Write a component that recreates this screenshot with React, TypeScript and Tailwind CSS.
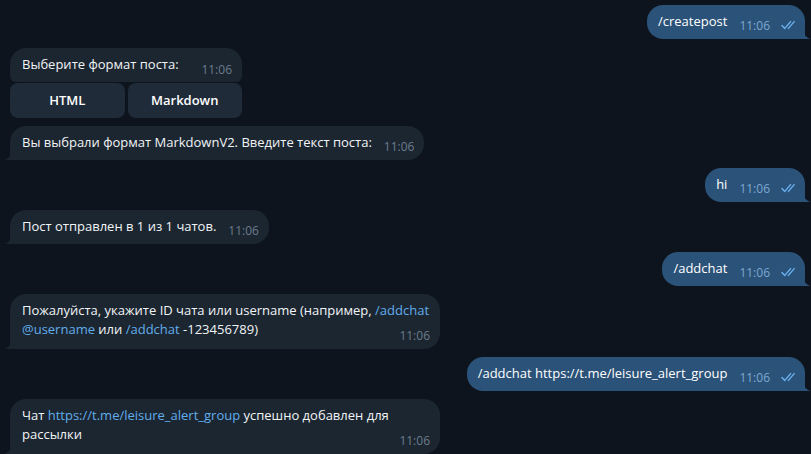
import React from "react";

const font = { fontFamily: '"Open Sans", "Noto Sans", sans-serif' };

function Checks() {
  return (
    <svg width="16" height="10" viewBox="0 0 16 10" fill="none" className="ml-[11px] mb-[1px] shrink-0">
      <path d="M1 5.6 L3.8 8.4 L9.6 1.6" stroke="#6ab2f2" strokeWidth="1.4" strokeLinecap="round" strokeLinejoin="round" />
      <path d="M7.4 8.4 L13.2 1.6" stroke="#6ab2f2" strokeWidth="1.4" strokeLinecap="round" />
    </svg>
  );
}

function InTail() {
  return (
    <svg width="9" height="14" viewBox="0 0 9 14" className="absolute -left-[6px] bottom-0">
      <path d="M9 0 V14 H0.5 C4 13 8 10 9 0 Z" fill="#1b2631" />
    </svg>
  );
}

function OutTail() {
  return (
    <svg width="9" height="14" viewBox="0 0 9 14" className="absolute -right-[6px] bottom-0">
      <path d="M0 0 V14 H8.5 C5 13 1 10 0 0 Z" fill="#2b5278" />
    </svg>
  );
}

function Out({ text, w }: { text: string; w?: string }) {
  return (
    <div className="flex justify-end pr-[6px]">
      <div className={`relative flex items-end bg-[#2b5278] rounded-l-[16px] rounded-tr-[16px] pl-[11px] pr-[8px] pt-[7px] pb-[8px] ${w ?? ""}`}>
        <span className="text-[13px] leading-[19px] text-white">{text}</span>
        <span className="ml-[12px] text-[12px] leading-[14px] text-[#7da8d3] translate-y-[2px]">11:06</span>
        <Checks />
        <OutTail />
      </div>
    </div>
  );
}

function In({ children, tail = true }: { children: React.ReactNode; tail?: boolean }) {
  return (
    <div className="flex pl-[10px]">
      <div className={`relative flex items-end bg-[#1b2631] rounded-r-[16px] rounded-tl-[16px] ${tail ? "" : "rounded-bl-[6px]"} pl-[12px] pr-[10px] pt-[7px] pb-[8px]`}>
        <span className="text-[13px] leading-[19px] text-[#f2f4f6]">{children}</span>
        <span className="ml-[12px] text-[12px] leading-[14px] text-[#6c7c8c] translate-y-[2px]">11:06</span>
        {tail && <InTail />}
      </div>
    </div>
  );
}

function InLong({ children }: { children: React.ReactNode }) {
  return (
    <div className="flex pl-[10px]">
      <div className="relative flex flex-col w-[430px] bg-[#1b2631] rounded-r-[16px] rounded-tl-[16px] pl-[12px] pr-[10px] pt-[7px] pb-[8px]">
        <p className="text-[13px] leading-[19px] text-[#f2f4f6]">{children}</p>
        <span className="self-end -mt-[12px] text-[12px] leading-[14px] text-[#6c7c8c] translate-y-[2px]">11:06</span>
        <InTail />
      </div>
    </div>
  );
}

const Link = ({ children }: { children: React.ReactNode }) => (
  <span className="text-[#62adeb]">{children}</span>
);

export default function App() {
  return (
    <div className="w-[811px] h-[454px] overflow-hidden bg-[#0e141d] pt-[5px] flex flex-col gap-[8px]" style={font}>
      <Out text="/createpost" />

      <div className="flex flex-col pl-[10px] gap-[1px] mt-[1px] w-[242px]">
        <div className="flex items-end justify-between bg-[#1b2631] rounded-t-[16px] rounded-b-[6px] pl-[12px] pr-[10px] pt-[7px] pb-[8px]">
          <span className="text-[13px] leading-[19px] text-[#f2f4f6]">Выберите формат поста:</span>
          <span className="text-[12px] leading-[14px] text-[#6c7c8c] translate-y-[3px]">11:06</span>
        </div>
        <div className="grid grid-cols-2 gap-[3px]">
          <div className="h-[35px] flex items-center justify-center rounded-[8px] bg-[#1f2b38] text-white text-[13px] font-semibold">HTML</div>
          <div className="h-[35px] flex items-center justify-center rounded-[8px] bg-[#1f2b38] text-white text-[13px] font-semibold">Markdown</div>
        </div>
      </div>

      <In>Вы выбрали формат MarkdownV2. Введите текст поста:</In>
      <Out text="hi" />
      <In>Пост отправлен в 1 из 1 чатов.</In>
      <Out text="/addchat" />
      <InLong>
        Пожалуйста, укажите ID чата или username (например, <Link>/addchat</Link>{" "}
        <Link>@username</Link> или <Link>/addchat</Link> -123456789)
      </InLong>
      <Out text="/addchat https://t.me/leisure_alert_group" />
      <InLong>
        Чат <Link>https://t.me/leisure_alert_group</Link> успешно добавлен для рассылки
      </InLong>
    </div>
  );
}
